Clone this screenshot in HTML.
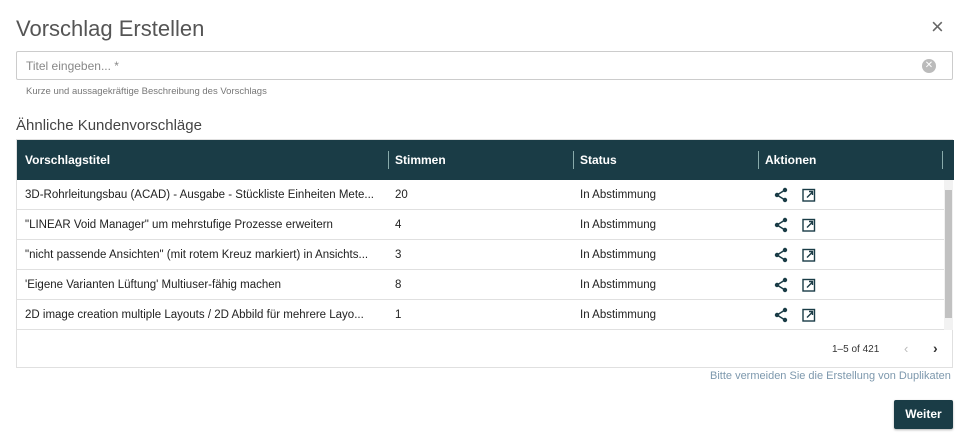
<!DOCTYPE html>
<html><head><meta charset="utf-8"><style>
*{box-sizing:border-box;margin:0;padding:0}
body{width:969px;height:443px;background:#fff;font-family:"Liberation Sans",sans-serif;color:#333;position:relative;overflow:hidden}
.abs{position:absolute}
.h1{left:16px;top:16px;font-size:22px;color:#555}
.x{left:931px;top:14px;font-size:22px;color:#666;font-weight:normal}
.inp{left:16px;top:51px;width:937px;height:29px;border:1px solid #ccc;border-radius:2px}
.inp span{position:absolute;left:9px;top:7px;font-size:12px;color:#888}
.clr{position:absolute;right:16px;top:7px;width:14px;height:14px;border-radius:50%;background:#bbb;color:#fff;font-size:10px;line-height:14px;text-align:center}
.help{left:26px;top:86px;font-size:9.5px;color:#777}
.sub{left:16px;top:117px;font-size:15px;color:#444}
.tbl{left:16px;top:139px;width:937px;height:229px;border:1px solid #e0e0e0}
.hd{position:absolute;left:0;top:0;width:937px;height:40px;background:#1a3c46;color:#fff;font-weight:bold;font-size:12px}
.hd div{position:absolute;top:13px}
.sep{position:absolute;top:11px;width:1px;height:18px;background:#8aa}
.row{position:absolute;left:0;width:927px;height:30px;border-bottom:1px solid #e0e0e0;font-size:11.5px;color:#222}
.row div{position:absolute;top:9px}
.sb{position:absolute;left:927px;top:40px;width:9px;height:150px;background:#f2f2f2}
.sb i{position:absolute;left:1px;top:10px;width:7px;height:128px;background:#c1c1c1}
.pg{position:absolute;top:204px;font-size:10px;color:#333}
.hint{left:710px;top:370px;font-size:11px;color:#7d98ad}
.btn{left:894px;top:400px;width:59px;height:29px;background:#1a3c46;color:#fff;font-weight:bold;font-size:12px;text-align:center;line-height:29px;border-radius:2px;box-shadow:0 1px 2px rgba(0,0,0,.3)}
</style></head><body>
<div class="abs h1">Vorschlag Erstellen</div>
<div class="abs x">×</div>
<div class="abs inp"><span>Titel eingeben... *</span><div class="clr">✕</div></div>
<div class="abs help">Kurze und aussagekräftige Beschreibung des Vorschlags</div>
<div class="abs sub">Ähnliche Kundenvorschläge</div>
<div class="abs tbl">
<div class="hd">
<div style="left:8px">Vorschlagstitel</div><span class="sep" style="left:371px"></span>
<div style="left:378px">Stimmen</div><span class="sep" style="left:556px"></span>
<div style="left:563px">Status</div><span class="sep" style="left:741px"></span>
<div style="left:748px">Aktionen</div><span class="sep" style="left:925px"></span>
</div>
<div class="sb"><i></i></div>
<div class="row" style="top:40px"><div style="left:8px">3D-Rohrleitungsbau (ACAD) - Ausgabe - Stückliste Einheiten Mete...</div><div style="left:378px">20</div><div style="left:563px">In Abstimmung</div><svg style="position:absolute;left:756px;top:7px" width="50" height="16"><g fill="#1a3c46"><circle cx="12" cy="3" r="2.2"/><circle cx="4" cy="8" r="2.2"/><circle cx="12" cy="13" r="2.2"/></g><path d="M12 3L4 8L12 13" stroke="#1a3c46" stroke-width="1.5" fill="none"/><rect x="30" y="2.5" width="11.5" height="11.5" fill="none" stroke="#1a3c46" stroke-width="1.4"/><path d="M34 10.5L39.5 5M36 4.5H39.5V8" stroke="#1a3c46" stroke-width="1.4" fill="none"/></svg></div>
<div class="row" style="top:70px"><div style="left:8px">"LINEAR Void Manager" um mehrstufige Prozesse erweitern</div><div style="left:378px">4</div><div style="left:563px">In Abstimmung</div><svg style="position:absolute;left:756px;top:7px" width="50" height="16"><g fill="#1a3c46"><circle cx="12" cy="3" r="2.2"/><circle cx="4" cy="8" r="2.2"/><circle cx="12" cy="13" r="2.2"/></g><path d="M12 3L4 8L12 13" stroke="#1a3c46" stroke-width="1.5" fill="none"/><rect x="30" y="2.5" width="11.5" height="11.5" fill="none" stroke="#1a3c46" stroke-width="1.4"/><path d="M34 10.5L39.5 5M36 4.5H39.5V8" stroke="#1a3c46" stroke-width="1.4" fill="none"/></svg></div>
<div class="row" style="top:100px"><div style="left:8px">"nicht passende Ansichten" (mit rotem Kreuz markiert) in Ansichts...</div><div style="left:378px">3</div><div style="left:563px">In Abstimmung</div><svg style="position:absolute;left:756px;top:7px" width="50" height="16"><g fill="#1a3c46"><circle cx="12" cy="3" r="2.2"/><circle cx="4" cy="8" r="2.2"/><circle cx="12" cy="13" r="2.2"/></g><path d="M12 3L4 8L12 13" stroke="#1a3c46" stroke-width="1.5" fill="none"/><rect x="30" y="2.5" width="11.5" height="11.5" fill="none" stroke="#1a3c46" stroke-width="1.4"/><path d="M34 10.5L39.5 5M36 4.5H39.5V8" stroke="#1a3c46" stroke-width="1.4" fill="none"/></svg></div>
<div class="row" style="top:130px"><div style="left:8px">'Eigene Varianten Lüftung' Multiuser-fähig machen</div><div style="left:378px">8</div><div style="left:563px">In Abstimmung</div><svg style="position:absolute;left:756px;top:7px" width="50" height="16"><g fill="#1a3c46"><circle cx="12" cy="3" r="2.2"/><circle cx="4" cy="8" r="2.2"/><circle cx="12" cy="13" r="2.2"/></g><path d="M12 3L4 8L12 13" stroke="#1a3c46" stroke-width="1.5" fill="none"/><rect x="30" y="2.5" width="11.5" height="11.5" fill="none" stroke="#1a3c46" stroke-width="1.4"/><path d="M34 10.5L39.5 5M36 4.5H39.5V8" stroke="#1a3c46" stroke-width="1.4" fill="none"/></svg></div>
<div class="row" style="top:160px"><div style="left:8px">2D image creation multiple Layouts / 2D Abbild für mehrere Layo...</div><div style="left:378px">1</div><div style="left:563px">In Abstimmung</div><svg style="position:absolute;left:756px;top:7px" width="50" height="16"><g fill="#1a3c46"><circle cx="12" cy="3" r="2.2"/><circle cx="4" cy="8" r="2.2"/><circle cx="12" cy="13" r="2.2"/></g><path d="M12 3L4 8L12 13" stroke="#1a3c46" stroke-width="1.5" fill="none"/><rect x="30" y="2.5" width="11.5" height="11.5" fill="none" stroke="#1a3c46" stroke-width="1.4"/><path d="M34 10.5L39.5 5M36 4.5H39.5V8" stroke="#1a3c46" stroke-width="1.4" fill="none"/></svg></div>
<div class="pg" style="left:815px">1–5 of 421</div>
<div class="pg" style="left:887px;top:201px;font-size:13px;color:#bbb">‹</div>
<div class="pg" style="left:916px;top:200px;font-size:14px;font-weight:bold">›</div>
</div>
<div class="abs hint">Bitte vermeiden Sie die Erstellung von Duplikaten</div>
<div class="abs btn">Weiter</div>
</body></html>
